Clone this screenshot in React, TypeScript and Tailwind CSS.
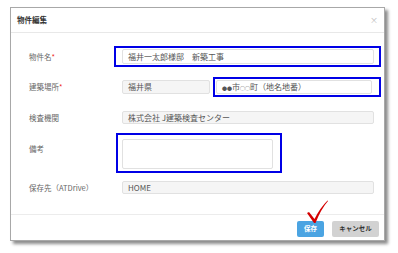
const FONT = "font-['Noto_Sans_CJK_JP','Noto_Sans',sans-serif]";

function Field({
  label,
  required,
  children,
  className = "",
  alignTop,
}: {
  label: string;
  required?: boolean;
  children: React.ReactNode;
  className?: string;
  alignTop?: boolean;
}) {
  return (
    <div className={`flex ${alignTop ? "items-start" : "items-center"} ${className}`}>
      <div className={`w-[93px] shrink-0 text-[7.5px] leading-none text-[#666] ${alignTop ? "pt-[6px]" : ""}`}>
        {label}
        {required && <span className="text-[#e22]">*</span>}
      </div>
      {children}
    </div>
  );
}

function Box({ value, white, className = "" }: { value?: React.ReactNode; white?: boolean; className?: string }) {
  return (
    <div
      className={`flex h-full items-center rounded-[2px] border border-[#e1e1e1] px-[5px] text-[8px] leading-none text-[#555] ${
        white ? "bg-white" : "bg-[#f5f5f5]"
      } ${className}`}
    >
      {value}
    </div>
  );
}

export default function App() {
  return (
    <div className={`relative h-[253px] w-[398px] overflow-hidden bg-white pl-[10px] pt-[7px] ${FONT}`}>
      <div className="flex h-[234px] w-[375px] flex-col border border-[#a8a8a8] bg-white shadow-[3px_3px_3px_rgba(0,0,0,0.45)]">
        {/* Header */}
        <div className="flex h-[25px] shrink-0 items-center justify-between border-b border-[#e8e8e8] pl-[6px] pr-[6px]">
          <span className="text-[7.5px] font-bold text-[#333]">物件編集</span>
          <span className="text-[8px] leading-none text-[#bbb]">×</span>
        </div>

        {/* Body */}
        <div className="flex flex-1 flex-col pl-[18px] pr-[10px]">
          <Field label="物件名" required className="mt-[16px] h-[15px]">
            <Box value="福井一太郎様邸　新築工事" white className="flex-1" />
          </Field>
          <Field label="建築場所" required className="mt-[16px] h-[14px]">
            <Box value="福井県" className="w-[88px]" />
            <Box
              value={
                <>
                  <span className="text-[5px]">●●</span>市<span className="text-[5px]">○○</span>町（地名地番）
                </>
              }
              white
              className="ml-[6px] w-[156px]"
            />
          </Field>
          <Field label="検査機関" className="mt-[17px] h-[13px]">
            <Box value="株式会社 J建築検査センター" className="flex-1" />
          </Field>
          <Field label="備考" alignTop className="mt-[15px] h-[30px]">
            <Box white className="w-[151px]" />
          </Field>
          <Field label="保存先（ATDrive）" className="mt-[12px] h-[13px]">
            <Box value="HOME" className="flex-1" />
          </Field>
        </div>

        {/* Footer */}
        <div className="flex h-[26px] shrink-0 items-start justify-end gap-[8px] border-t border-[#ececec] pr-[5px] pt-[6px]">
          <button className="flex h-[16px] w-[27px] items-center justify-center rounded-[2px] bg-[#4ba4e2] text-[6.5px] font-bold text-white">
            保存
          </button>
          <button className="flex h-[16px] w-[47px] items-center justify-center rounded-[2px] bg-[#d2d2d2] text-[6.5px] font-bold text-[#333]">
            キャンセル
          </button>
        </div>
      </div>

      {/* Annotation overlays */}
      <div className="absolute left-[114px] top-[46px] h-[21px] w-[267px] border-2 border-[#0000e6]" />
      <div className="absolute left-[213px] top-[77px] h-[20px] w-[168px] border-2 border-[#0000e6]" />
      <div className="absolute left-[116px] top-[133px] h-[40px] w-[166px] border-2 border-[#0000e6]" />
      <svg className="absolute left-[305px] top-[199px]" width="24" height="26" viewBox="0 0 24 26">
        <path d="M2 14 L4 13 L9.5 20 Q15 9 22.5 1.5 L23 2 Q16 10 10.5 24 L9 24 Z" fill="#d40000" />
      </svg>
    </div>
  );
}
